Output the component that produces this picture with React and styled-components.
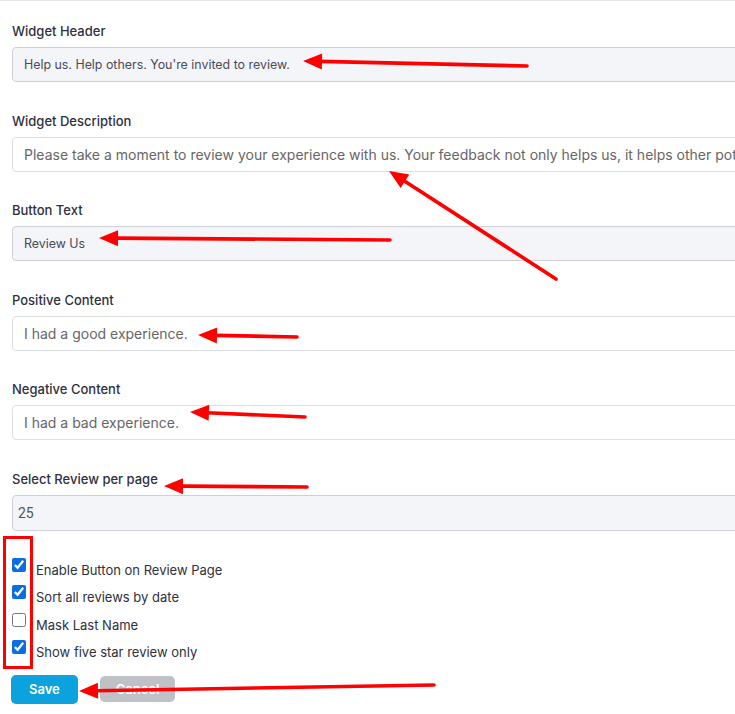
import React from 'react';
import styled, { createGlobalStyle } from 'styled-components';

const fields = [
  { label: 'Widget Header', value: "Help us. Help others. You're invited to review.", readOnly: true },
  { label: 'Widget Description', value: 'Please take a moment to review your experience with us. Your feedback not only helps us, it helps other potential customers.' },
  { label: 'Button Text', value: 'Review Us', readOnly: true },
  { label: 'Positive Content', value: 'I had a good experience.' },
  { label: 'Negative Content', value: 'I had a bad experience.' },
];

const options = [
  { label: 'Enable Button on Review Page', checked: true },
  { label: 'Sort all reviews by date', checked: true },
  { label: 'Mask Last Name', checked: false },
  { label: 'Show five star review only', checked: true },
];

// annotation arrows: x1,y1 = tail, x2,y2 = tip
const arrows = [
  [527, 65, 303, 60],
  [556, 278, 389, 170],
  [390, 239, 99, 237],
  [297, 336, 198, 334],
  [305, 416, 190, 411],
  [307, 486, 164, 485],
  [434, 684, 79, 690],
];

const Arrow = ({ x1, y1, x2, y2 }) => {
  const len = Math.hypot(x2 - x1, y2 - y1);
  const ux = (x2 - x1) / len;
  const uy = (y2 - y1) / len;
  const bx = x2 - ux * 19;
  const by = y2 - uy * 19;
  const pts = [
    [x2, y2],
    [bx - uy * 8, by + ux * 8],
    [bx + uy * 8, by - ux * 8],
  ].map(p => p.join(',')).join(' ');
  return (
    <g>
      <line x1={x1} y1={y1} x2={bx + ux * 2} y2={by + uy * 2} stroke="#ff0000" strokeWidth="3.6" strokeLinecap="round" />
      <polygon points={pts} fill="#ff0000" />
    </g>
  );
};

const App = () => {
  return (
    <Page>
      <GlobalStyle />
      <Form>
        {fields.map(f => (
          <Field key={f.label}>
            <Label>{f.label}</Label>
            <Input readOnly={f.readOnly} value={f.value} onChange={() => {}} />
          </Field>
        ))}
        <Field>
          <Label>Select Review per page</Label>
          <Select defaultValue="25">
            <option value="10">10</option>
            <option value="25">25</option>
            <option value="50">50</option>
          </Select>
        </Field>

        <Options>
          {options.map(o => (
            <Option key={o.label}>
              <input type="checkbox" defaultChecked={o.checked} />
              <span>{o.label}</span>
            </Option>
          ))}
        </Options>

        <Actions>
          <Button primary>Save</Button>
          <Button>Cancel</Button>
        </Actions>
      </Form>

      <Annotations viewBox="0 0 735 714">
        <rect x="4.5" y="536.5" width="27" height="130" fill="none" stroke="#ff0000" strokeWidth="3" />
        {arrows.map(([x1, y1, x2, y2], i) => (
          <Arrow key={i} x1={x1} y1={y1} x2={x2} y2={y2} />
        ))}
      </Annotations>
    </Page>
  );
};

export default App;

const GlobalStyle = createGlobalStyle`
  html, body {
    margin: 0;
    padding: 0;
    background: #fff;
    overflow: hidden;
  }
  body {
    font-family: Inter, "Open Sans", sans-serif;
  }
`;

const Page = styled.div`
  position: relative;
  width: 735px;
  height: 714px;
  overflow: hidden;
  border-top: 1px solid #e8e8ea;
  box-sizing: border-box;
`;

const Form = styled.div`
  width: 1000px;
  padding: 21px 0 0 12px;
`;

const Field = styled.div`
  display: flex;
  flex-direction: column;
  margin-bottom: 29.5px;
`;

const Label = styled.label`
  font-size: 13px;
  line-height: 18px;
  font-weight: 500;
  color: #2e3040;
  margin-bottom: 7px;
`;

const Input = styled.input`
  box-sizing: border-box;
  height: 35px;
  padding: 0 11px;
  font-family: inherit;
  font-size: ${p => (p.readOnly ? '12.4px' : '14px')};
  color: ${p => (p.readOnly ? '#4a4a55' : '#666')};
  background: ${p => (p.readOnly ? '#f4f5f9' : '#fff')};
  border: 1px solid ${p => (p.readOnly ? '#cfd0d5' : '#dcdfe4')};
  border-radius: 4px;
  outline: none;
`;

const Select = styled.select`
  box-sizing: border-box;
  height: 36px;
  padding: 0 5px;
  font-family: Roboto, "Liberation Sans", sans-serif;
  font-size: 14px;
  color: #555;
  background: #f4f5f9;
  border: 1px solid #cfd0d5;
  border-radius: 4px;
  appearance: none;
  outline: none;
`;

const Options = styled.div`
  display: flex;
  flex-direction: column;
  margin-top: -2px;
`;

const Option = styled.label`
  display: flex;
  align-items: flex-start;
  height: 27.4px;
  font-size: 13px;
  color: #2e3040;

  input {
    width: 14px;
    height: 14px;
    margin: 0 10px 0 0;
    accent-color: #0b6ee0;
  }

  span {
    padding-top: 4px;
    line-height: 16px;
  }
`;

const Actions = styled.div`
  display: flex;
  align-items: center;
  gap: 22px;
  margin: 7px 0 0 -1px;
`;

const Button = styled.button`
  height: ${p => (p.primary ? '29px' : '26px')};
  padding: 0 ${p => (p.primary ? '18px' : '16px')};
  font-family: inherit;
  font-size: 13px;
  font-weight: 600;
  color: #fff;
  background: ${p => (p.primary ? '#0ba2de' : '#c0c1c6')};
  border: none;
  border-radius: 5px;
`;

const Annotations = styled.svg`
  position: absolute;
  top: 0;
  left: 0;
  width: 735px;
  height: 714px;
  pointer-events: none;
`;
